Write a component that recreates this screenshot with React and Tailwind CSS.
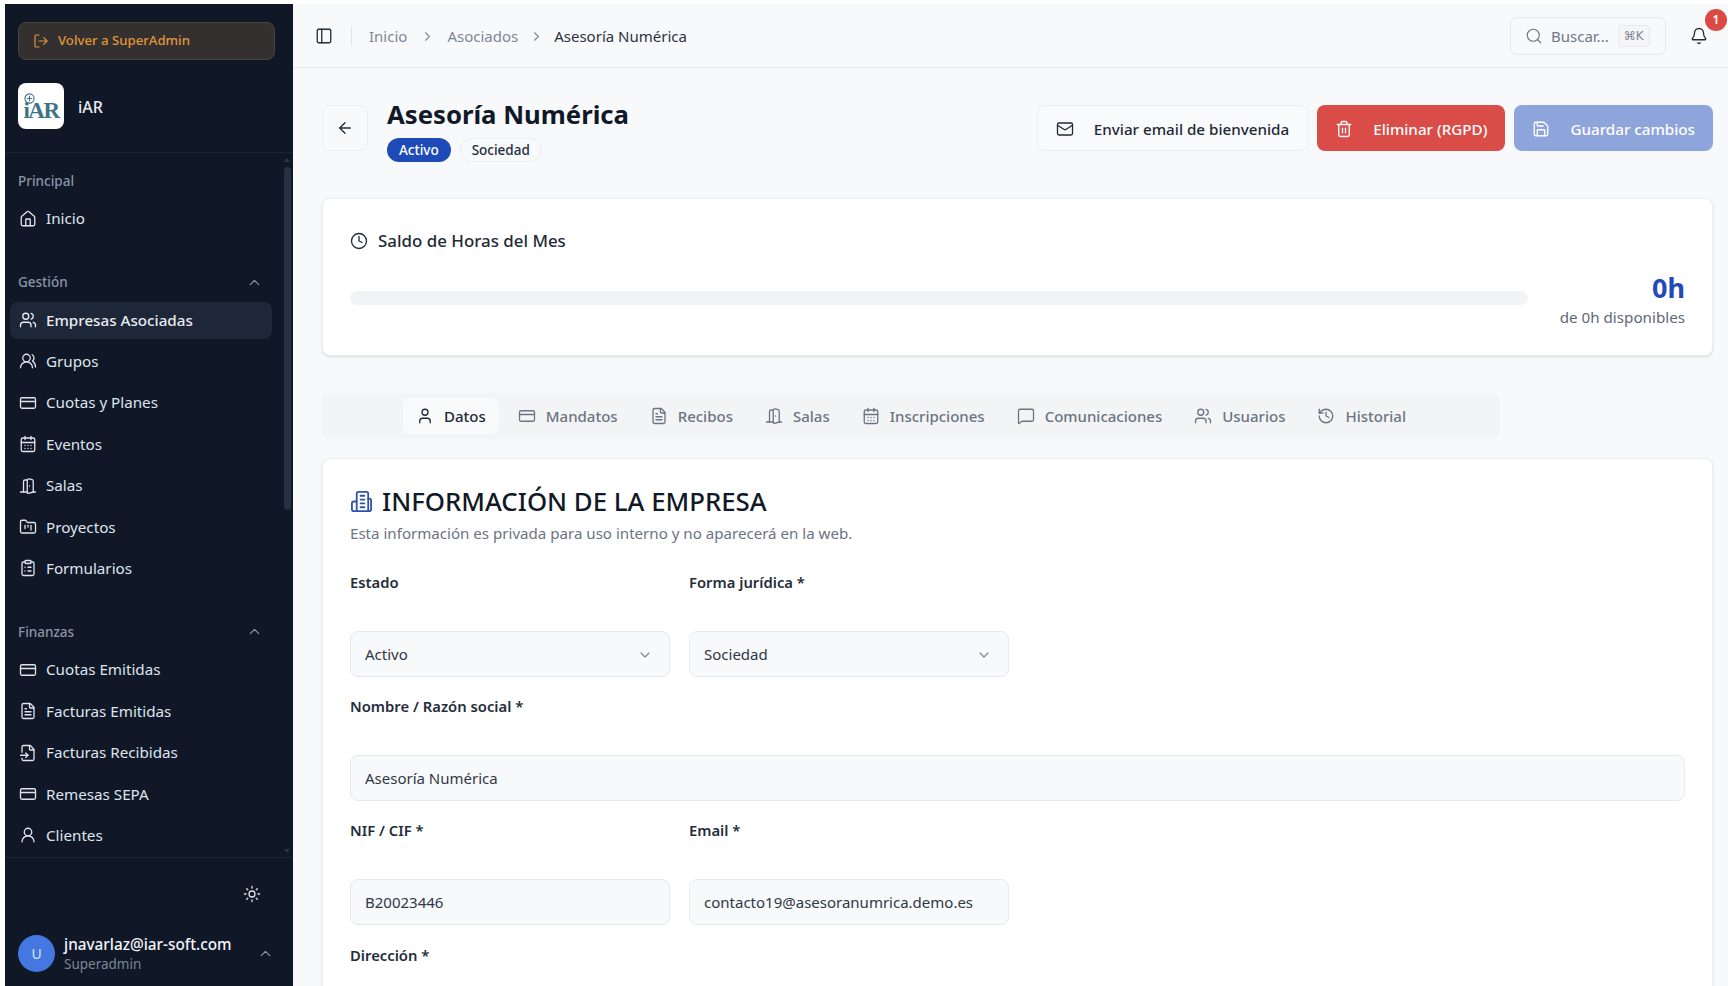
import {
  ArrowLeft, Bell, CalendarDays, ChevronDown, ChevronRight, ChevronUp, ClipboardList, Clock,
  CreditCard, DoorOpen, FileInput, FileText, FolderKanban, History, House, LogOut, Mail, MessageSquare,
  PanelLeft, Save, Search, Sun, Trash2, User, UserRound, Users, UsersRound,
} from 'lucide-react';

const NavItem = ({ icon: Icon, label, active }) => (
  <div className={`flex items-center gap-[9px] h-[37px] px-[9px] rounded-lg text-[15.2px] ${active ? 'bg-[#1e2738] font-medium text-[#e8ecf2]' : 'text-[#dfe4ec]'}`}>
    <Icon size={18} strokeWidth={1.75} className="shrink-0" />
    <span>{label}</span>
  </div>
);

const SectionLabel = ({ children, collapsible, className = '' }) => (
  <div className={`flex items-center justify-between h-5 pl-2 pr-[9px] text-[13.5px] font-medium text-[#8b94a5] ${className}`}>
    <span>{children}</span>
    {collapsible && <ChevronUp size={17} strokeWidth={1.75} />}
  </div>
);

const Sidebar = () => (
  <aside className="w-[288px] shrink-0 h-full bg-[#101828] flex flex-col">
    <div className="px-[13px] pt-[18px] pb-[23px] border-b border-[#1c2536]">
      <div className="flex items-center gap-[9px] h-[38px] mr-[5px] pl-[14px] rounded-lg bg-[#33302f] border border-[#4b4539] text-[#e0953a] text-[13.2px] font-medium">
        <LogOut size={16} strokeWidth={1.75} />
        <span>Volver a SuperAdmin</span>
      </div>
      <div className="flex items-center gap-[14px] mt-[23px]">
        <div className="relative w-[46px] h-[46px] rounded-lg bg-white overflow-hidden flex items-end justify-center">
          <span className="mb-[7px] font-['Liberation_Serif',serif] text-[23px] leading-[23px] font-bold tracking-[-1.5px] text-[#3f7486]">iAR</span>
          <svg className="absolute left-[6px] top-[10px]" width="11" height="11" viewBox="0 0 12 12" fill="#ffffff" stroke="#3f7486" strokeWidth="1.2">
            <circle cx="6" cy="6" r="5" />
            <path d="M6 3v6M3 6h6" />
          </svg>
        </div>
        <span className="pt-[2px] text-[16px] font-medium text-[#e8ecf2]">iAR</span>
      </div>
    </div>

    <div className="relative flex-1 min-h-0 overflow-hidden pl-[5px] pr-[21px]">
      <SectionLabel className="mt-[18px]">Principal</SectionLabel>
      <div className="mt-[9px]"><NavItem icon={House} label="Inicio" /></div>

      <SectionLabel collapsible className="mt-[35px]">Gestión</SectionLabel>
      <div className="mt-[9.5px] flex flex-col gap-[4.4px]">
        <NavItem icon={Users} label="Empresas Asociadas" active />
        <NavItem icon={UsersRound} label="Grupos" />
        <NavItem icon={CreditCard} label="Cuotas y Planes" />
        <NavItem icon={CalendarDays} label="Eventos" />
        <NavItem icon={DoorOpen} label="Salas" />
        <NavItem icon={FolderKanban} label="Proyectos" />
        <NavItem icon={ClipboardList} label="Formularios" />
      </div>

      <SectionLabel collapsible className="mt-[35px]">Finanzas</SectionLabel>
      <div className="mt-[9.5px] flex flex-col gap-[4.4px]">
        <NavItem icon={CreditCard} label="Cuotas Emitidas" />
        <NavItem icon={FileText} label="Facturas Emitidas" />
        <NavItem icon={FileInput} label="Facturas Recibidas" />
        <NavItem icon={CreditCard} label="Remesas SEPA" />
        <NavItem icon={UserRound} label="Clientes" />
      </div>

      {/* scrollbar */}
      <div className="absolute right-[3px] top-[5px] w-0 h-0 border-x-[3px] border-x-transparent border-b-[4px] border-b-[#2b3648]" />
      <div className="absolute right-[2px] top-[14px] w-[7px] h-[343px] rounded-full bg-[#263143]" />
      <div className="absolute right-[3px] bottom-[4px] w-0 h-0 border-x-[3px] border-x-transparent border-t-[4px] border-t-[#2b3648]" />
    </div>

    <div className="h-[129px] shrink-0 border-t border-[#1c2536] px-[13px]">
      <div className="flex justify-end pr-[19px] pt-[27px] text-[#dfe4ec]">
        <Sun size={18} strokeWidth={1.75} />
      </div>
      <div className="flex items-center mt-[29px]">
        <div className="w-[37px] h-[37px] rounded-full bg-[#4478e0] text-[#dbe6fb] text-[14px] flex items-center justify-center shrink-0">U</div>
        <div className="ml-[9px] flex-1 min-w-0 pt-[2px]">
          <div className="text-[15.3px] leading-[20px] font-medium text-[#f1f4f8]">jnavarlaz@iar-soft.com</div>
          <div className="text-[13.5px] leading-[20px] text-[#7c8596]">Superadmin</div>
        </div>
        <ChevronUp size={17} strokeWidth={1.75} className="text-[#8b94a5] mr-[6px] shrink-0" />
      </div>
    </div>
  </aside>
);

const Header = () => (
  <header className="h-[64px] shrink-0 border-b border-[#e5e8ee] flex items-center pl-[22px] pr-[17px] pt-[1px]">
    <PanelLeft size={18} strokeWidth={1.75} className="text-[#1f2937]" />
    <div className="w-px h-5 bg-[#e2e5ea] ml-[18px] mr-[17px]" />
    <div className="flex items-center text-[15px] text-[#7f8794]">
      <span>Inicio</span>
      <ChevronRight size={15} strokeWidth={1.75} className="mx-[12.5px]" />
      <span>Asociados</span>
      <ChevronRight size={15} strokeWidth={1.75} className="mx-[10.5px]" />
      <span className="text-[#2a3342]">Asesoría Numérica</span>
    </div>
    <div className="ml-auto flex items-center w-[156px] h-[38px] rounded-lg border border-[#e7e9ee] bg-[#f8f9fb] pl-[14px] text-[#6f7785] text-[15px]">
      <Search size={18} strokeWidth={1.5} className="shrink-0" />
      <span className="ml-[8px]">Buscar...</span>
      <span className="ml-[9px] h-[22px] px-[5px] rounded border border-[#e7e9ee] bg-[#f4f5f7] text-[12px] leading-[20px] text-[#7f8794] font-['DejaVu_Sans',sans-serif]">⌘K</span>
    </div>
    <div className="relative ml-[24px] mr-[3px]">
      <Bell size={18} strokeWidth={1.75} className="text-[#1f2937]" />
      <span className="absolute -right-[19px] -top-[18px] w-[22px] h-[22px] rounded-full bg-[#dc4a46] text-white text-[12px] font-semibold flex items-center justify-center">1</span>
    </div>
  </header>
);

const TopButton = ({ icon: Icon, label, className }) => (
  <div className={`flex items-center gap-[20px] h-[46px] rounded-lg px-[18px] pt-[2px] text-[15.2px] font-medium ${className}`}>
    <Icon size={18} strokeWidth={1.75} />
    <span>{label}</span>
  </div>
);

const Tab = ({ icon: Icon, label, active }) => (
  <div className={`flex items-center gap-[10px] h-[36px] px-[13px] rounded-md text-[15px] font-medium ${active ? 'bg-[#f9fafb] text-[#1f2937]' : 'text-[#6b7482]'}`}>
    <Icon size={18} strokeWidth={1.75} />
    <span className="pt-[1px]">{label}</span>
  </div>
);

const Field = ({ label, value, select, className = '' }) => (
  <div className={className}>
    <div className="h-[22px] text-[14.8px] leading-[22px] font-semibold text-[#252d3b]">{label}</div>
    <div className="mt-[38px] h-[46px] rounded-lg border border-[#e6e9ee] bg-[#f8f9fb] flex items-center justify-between pl-[14px] pr-[16px] pt-[1px] text-[15px] text-[#2f3846]">
      <span>{value}</span>
      {select && <ChevronDown size={16} strokeWidth={1.75} className="text-[#7f8794]" />}
    </div>
  </div>
);

const BuildingIcon = () => (
  <svg width="23" height="23" viewBox="0 0 24 24" fill="none" stroke="#2f55a8" strokeWidth="1.9" strokeLinecap="round" strokeLinejoin="round">
    <path d="M7 22V4a2 2 0 0 1 2-2h8a2 2 0 0 1 2 2v18Z" />
    <path d="M7 12H4a2 2 0 0 0-2 2v6a2 2 0 0 0 2 2h3" />
    <path d="M19 9h1a2 2 0 0 1 2 2v9a2 2 0 0 1-2 2h-1" />
    <path d="M11 6h4M11 10h4M11 14h4M11 18h4" />
  </svg>
);

export default function App() {
  return (
    <div className="w-full h-screen overflow-hidden bg-white pt-1 pl-[5px] flex font-['Noto_Sans',sans-serif]">
      <Sidebar />
      <main className="flex-1 min-w-0 h-full bg-[#f8f9fb] flex flex-col overflow-hidden">
        <Header />
        <div className="pl-[29px] pr-[15px]">
          <div className="flex items-center mt-[37px] h-[46px]">
            <div className="w-[46px] h-[46px] rounded-lg border border-[#eceef2] bg-[#f8f9fb] flex items-center justify-center text-[#1f2937]">
              <ArrowLeft size={18} strokeWidth={1.75} />
            </div>
            <div className="ml-[19px] self-start -mt-[7px]">
              <h1 className="text-[25.7px] leading-[34px] font-bold text-[#111827]">Asesoría Numérica</h1>
              <div className="flex items-center gap-[9px] mt-[5.5px]">
                <span className="h-6 px-[12px] rounded-full bg-[#1f4bb8] text-white text-[13.5px] font-medium leading-[24px]">Activo</span>
                <span className="h-6 px-[11px] rounded-full border border-[#eceef2] bg-[#f8f9fb] text-[#252d3b] text-[13.5px] font-medium leading-[22px]">Sociedad</span>
              </div>
            </div>
            <div className="ml-auto flex gap-[9px]">
              <TopButton icon={Mail} label="Enviar email de bienvenida" className="border border-[#eceef2] bg-[#f9fafb] text-[#1f2937]" />
              <TopButton icon={Trash2} label="Eliminar (RGPD)" className="bg-[#d94c48] text-white" />
              <TopButton icon={Save} label="Guardar cambios" className="bg-[#8ea5dc] text-white" />
            </div>
          </div>

          <section className="mt-[47px] h-[158px] rounded-lg border border-[#eceef2] bg-white px-[27px] shadow-sm">
            <div className="flex items-center gap-[10px] pt-[30px] h-[54px] text-[#1f2937]">
              <Clock size={18} strokeWidth={1.75} />
              <span className="text-[16.9px] font-medium">Saldo de Horas del Mes</span>
            </div>
            <div className="flex items-center mt-[16px]">
              <div className="flex-1 h-[14px] mb-[4px] rounded-full bg-[#f1f3f5]" />
              <div className="w-[157px] text-right pt-[2px]">
                <div className="text-[27px] leading-[34px] font-bold text-[#1f4bb8]">0h</div>
                <div className="text-[15.2px] leading-[25px] text-[#5f6876]">de 0h disponibles</div>
              </div>
            </div>
          </section>

          <div className="mt-[37px] w-[1178px] h-[46px] rounded-lg bg-[#f3f4f6] flex items-center justify-center gap-[6px]">
            <Tab icon={User} label="Datos" active />
            <Tab icon={CreditCard} label="Mandatos" />
            <Tab icon={FileText} label="Recibos" />
            <Tab icon={DoorOpen} label="Salas" />
            <Tab icon={CalendarDays} label="Inscripciones" />
            <Tab icon={MessageSquare} label="Comunicaciones" />
            <Tab icon={Users} label="Usuarios" />
            <Tab icon={History} label="Historial" />
          </div>

          <section className="mt-[19px] rounded-lg border border-[#eceef2] bg-white px-[27px] pt-[24px] pb-[40px] shadow-sm">
            <div className="flex items-center gap-[9px] h-[36px] text-[#111827]">
              <BuildingIcon />
              <h2 className="text-[25.8px] font-medium">INFORMACIÓN DE LA EMPRESA</h2>
            </div>
            <p className="text-[15.1px] leading-[24px] text-[#6b7482] mt-[2px]">Esta información es privada para uso interno y no aparecerá en la web.</p>

            <div className="grid grid-cols-[320px_320px] gap-x-[19px] mt-[26px]">
              <Field label="Estado" value="Activo" select />
              <Field label="Forma jurídica *" value="Sociedad" select />
            </div>
            <Field className="mt-[18px]" label="Nombre / Razón social *" value="Asesoría Numérica" />
            <div className="grid grid-cols-[320px_320px] gap-x-[19px] mt-[18px]">
              <Field label="NIF / CIF *" value="B20023446" />
              <Field label="Email *" value="contacto19@asesoranumrica.demo.es" />
            </div>
            <Field className="mt-[19px]" label="Dirección *" value="" />
          </section>
        </div>
      </main>
    </div>
  );
}
